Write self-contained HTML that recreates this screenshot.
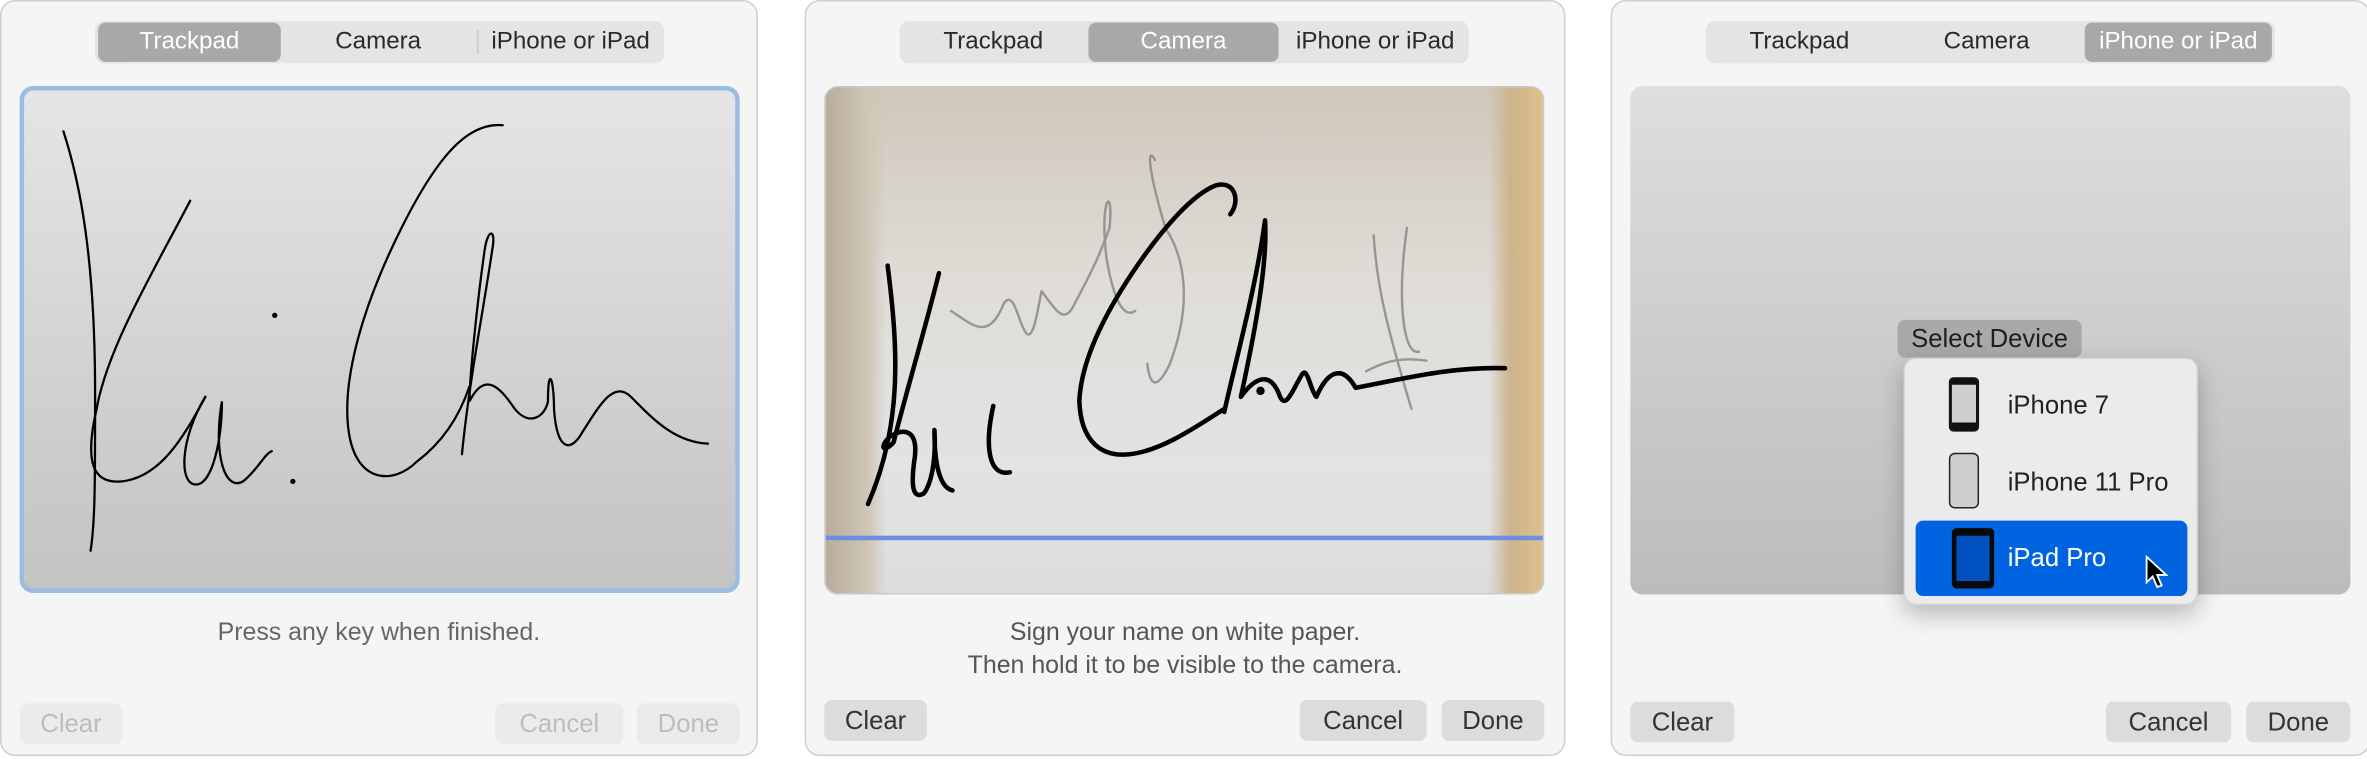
<!DOCTYPE html>
<html><head><meta charset="utf-8"><style>
html,body{margin:0;padding:0;width:2367px;height:759px;overflow:hidden;background:#fff;}
#w{position:absolute;left:0;top:0;width:1568px;height:503px;transform:scale(1.50957,1.509);transform-origin:0 0;font-family:"Liberation Sans",sans-serif;}
.p{position:absolute;top:0;height:501px;background:#f5f5f5;border:1px solid #cfcfcf;border-radius:10px;box-sizing:border-box;}
.seg{position:absolute;top:13px;height:28px;width:377px;background:#e4e4e4;border-radius:6px;font-size:16px;color:#2a2a2a;}
.seg span{position:absolute;top:0;height:28px;line-height:28px;text-align:center;}
.seg .sel{background:#a8a8a8;color:#fff;border-radius:5px;top:1px;height:26px;line-height:26px;}
.div{position:absolute;top:6px;width:1px;height:16px;background:#c8c8c8;}
.btn{position:absolute;height:27px;line-height:27px;text-align:center;font-size:17px;border-radius:5px;background:#dcdcdc;color:#333;}
.dis{background:#ebebeb;color:#bdbdbd;}
.msg{position:absolute;left:0;width:100%;text-align:center;font-size:16.5px;color:#666;line-height:22px;}
</style></head><body><div id="w">

<!-- Panel 1 -->
<div class="p" style="left:0;width:502px;">
 <div class="seg" style="left:62px;">
  <span class="sel" style="left:2px;width:121px;">Trackpad</span>
  <span style="left:125px;width:125px;">Camera</span>
  <div class="div" style="left:253px"></div>
  <span style="left:254px;width:122px;">iPhone or iPad</span>
 </div>
 <div style="position:absolute;left:12px;top:56px;width:477px;height:336px;box-sizing:border-box;border:3px solid #97bde3;border-radius:9px;background:linear-gradient(#e5e5e5,#c3c3c3);overflow:hidden;">
  <svg width="477" height="336" viewBox="12 56 477 336" style="position:absolute;left:-3px;top:-3px" fill="none" stroke="#000" stroke-width="1.5" stroke-linecap="round">
   <path d="M41,86 C52,120 62,170 62,260 C62,320 62,345 59,364"/>
   <path d="M125,132 C100,180 70,230 63,270 C55,305 60,320 80,318 C105,315 120,290 135,262"/>
   <path d="M135,262 C118,290 117,322 130,320 C140,318 146,290 146,265 C140,300 148,325 160,318 C170,310 174,300 179,298"/>
   <circle cx="181" cy="208" r="1" fill="#000"/><circle cx="193" cy="318" r="1" fill="#000"/>
   <path d="M332,82 C310,80 290,100 265,150 C240,200 225,250 230,285 C235,320 260,320 275,305 C295,290 305,270 310,255"/>
   <path d="M305,300 C310,250 320,200 325,165 C328,150 322,150 320,165 C315,200 310,250 310,265 C320,245 330,255 340,270 C350,282 360,275 362,265 C362,240 366,250 366,270 C368,300 378,298 385,285 C395,270 405,250 417,262 C430,275 445,292 468,293"/>
  </svg>
 </div>
 <div class="msg" style="top:407px;">Press any key when finished.</div>
 <div class="btn dis" style="left:12px;top:465px;width:68px;">Clear</div>
 <div class="btn dis" style="left:327px;top:465px;width:85px;">Cancel</div>
 <div class="btn dis" style="left:421px;top:465px;width:68px;">Done</div>
</div>

<!-- Panel 2 -->
<div class="p" style="left:533px;width:504px;">
 <div class="seg" style="left:62px;">
  <span style="left:0;width:124px;">Trackpad</span>
  <span class="sel" style="left:125px;width:126px;">Camera</span>
  <span style="left:253px;width:124px;">iPhone or iPad</span>
 </div>
 <div style="position:absolute;left:12px;top:56px;width:477px;height:337px;border-radius:9px;overflow:hidden;border:1px solid #c9c9c9;box-sizing:border-box;background:linear-gradient(180deg,#cfc7bb 0%,#e0ddd8 40%,#e2e3e4 75%,#dcdcdc 100%);">
  <div style="position:absolute;left:0;top:0;width:40px;height:337px;background:linear-gradient(90deg,#b8ad9a,#cfc6b6 70%,rgba(215,210,200,0));"></div>
  <div style="position:absolute;right:0;top:0;width:36px;height:337px;background:linear-gradient(90deg,rgba(200,185,150,0),#cdb48c 40%,#ddc08a);"></div>
  <div style="position:absolute;left:0;top:297px;width:477px;height:3px;background:#6f8ee3;"></div>
  <svg width="477" height="337" viewBox="546 56 477 337" style="position:absolute;left:-1px;top:-1px" fill="none" stroke-linecap="round" stroke-linejoin="round">
   <g stroke="#8a8a8a" stroke-width="1.6" opacity="0.85">
    <path d="M630,205 C645,215 655,225 665,200 C672,190 675,215 680,220 C685,225 688,200 690,192 C700,205 705,215 712,200 C720,185 728,170 735,150 C738,120 728,130 733,170 C738,200 745,210 752,205"/>
    <path d="M765,105 C760,95 760,110 772,150 C785,170 790,200 775,240 C768,255 762,258 760,240"/>
    <path d="M910,155 C912,190 920,220 935,270 M932,150 C925,200 930,235 940,232 M905,245 C915,240 925,235 945,238"/>
   </g>
   <g stroke="#000" stroke-width="3">
    <path d="M588,175 C595,230 598,280 575,333"/>
    <path d="M622,180 C612,220 600,260 592,292 C585,300 582,295 590,288 C600,282 608,285 606,302 C603,322 605,330 612,326 C618,318 620,300 619,284 C619,305 622,322 631,324"/>
    <path d="M658,268 C652,295 655,315 669,312"/>
    <path d="M815,141 C822,132 818,118 805,122 C790,128 770,150 750,180 C730,210 716,240 715,265 C716,292 730,302 748,300 C770,298 795,280 811,270"/>
    <path d="M811,272 C818,240 832,190 838,145 C840,175 830,225 822,262 C832,248 842,245 848,262 C852,270 856,258 862,248 C866,240 868,258 872,262 C878,248 888,238 898,256 C930,250 960,242 997,243"/>
    <circle cx="835" cy="258" r="1.3" fill="#000"/>
   </g>
  </svg>
 </div>
 <div class="msg" style="top:407px;color:#555;">Sign your name on white paper.<br>Then hold it to be visible to the camera.</div>
 <div class="btn" style="left:12px;top:463px;width:68px;">Clear</div>
 <div class="btn" style="left:327px;top:463px;width:84px;">Cancel</div>
 <div class="btn" style="left:421px;top:463px;width:68px;">Done</div>
</div>

<!-- Panel 3 -->
<div class="p" style="left:1067px;width:503px;">
 <div class="seg" style="left:62px;">
  <span style="left:0;width:124px;">Trackpad</span>
  <span style="left:125px;width:122px;">Camera</span>
  <span class="sel" style="left:251px;width:124px;">iPhone or iPad</span>
 </div>
 <div style="position:absolute;left:12px;top:56px;width:477px;height:337px;border-radius:8px;background:linear-gradient(#dedede,#bcbcbc);"></div>
 <div style="position:absolute;left:189px;top:211px;width:122px;height:25px;border-radius:5px;background:#a9a9a9;color:#1e1e1e;font-size:17px;line-height:25px;text-align:center;">Select Device</div>
 <div style="position:absolute;left:193px;top:236px;width:195px;height:164px;border-radius:8px;background:#ebebeb;box-shadow:0 6px 16px rgba(0,0,0,0.25);border:1px solid #d6d6d6;box-sizing:border-box;">
  <div style="position:absolute;left:29px;top:12px;width:20px;height:36px;border:2px solid #111;border-top-width:5px;border-bottom-width:6px;border-radius:3px;background:#cfcfcf;box-sizing:border-box;"></div>
  <div style="position:absolute;left:68px;top:21px;font-size:17px;color:#222;">iPhone 7</div>
  <div style="position:absolute;left:29px;top:62px;width:20px;height:37px;border:1.5px solid #222;border-radius:4px;background:#cfcfcf;box-sizing:border-box;"></div>
  <div style="position:absolute;left:68px;top:72px;font-size:17px;color:#222;">iPhone 11 Pro</div>
  <div style="position:absolute;left:7px;top:107px;width:180px;height:50px;border-radius:5px;background:#0064e1;">
   <div style="position:absolute;left:24px;top:5px;width:28px;height:40px;border:3px solid #0a0a0a;border-top-width:5px;border-bottom-width:5px;border-radius:3px;background:#0050c0;box-sizing:border-box;"></div>
   <div style="position:absolute;left:61px;top:15px;font-size:17px;color:#fff;">iPad Pro</div>
   <svg style="position:absolute;left:152px;top:23px" width="16" height="24" viewBox="0 0 16 24"><path d="M1,1 L1,18 L5,14 L8,21 L11,20 L8,13 L14,13 Z" fill="#000" stroke="#fff" stroke-width="1.2"/></svg>
  </div>
 </div>
 <div class="btn" style="left:12px;top:464px;width:69px;">Clear</div>
 <div class="btn" style="left:327px;top:464px;width:83px;">Cancel</div>
 <div class="btn" style="left:420px;top:464px;width:69px;">Done</div>
</div>

</div></body></html>
